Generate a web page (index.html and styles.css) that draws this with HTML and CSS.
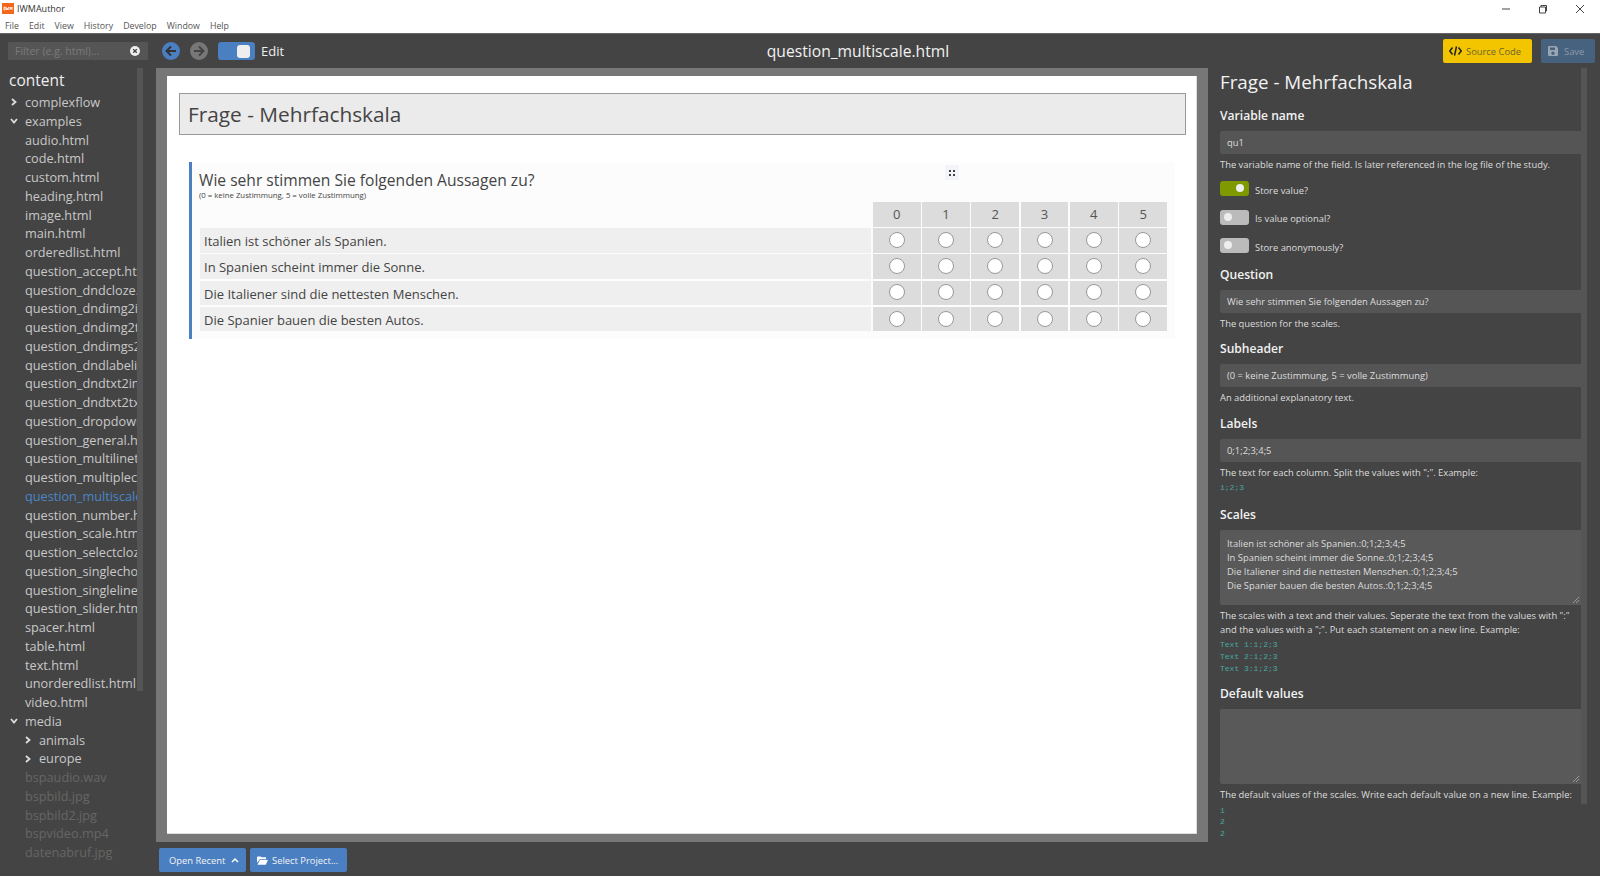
FILE: index.html
```html
<!DOCTYPE html>
<html lang="en">

<head>
    <meta charset="UTF-8">
    <title>IWMAuthor</title>
    <link rel="stylesheet" href="styles.css">
</head>

<body>
    <header class="titlebar">
        <div class="title-row">
            <svg class="app-icon" width="12" height="11" viewBox="0 0 12 11"><rect width="12" height="11" fill="#f4661b"/><path d="M2 4h1.2v3H2zM4 4l.6 3 .7-2 .7 2 .6-3M8 7V4l1 2 1-2v3" fill="none" stroke="#fff" stroke-width=".8"/></svg>
            <span class="app-name">IWMAuthor</span>
            <div class="win-buttons">
                <svg width="10" height="10" viewBox="0 0 10 10"><path d="M1 5h8" stroke="#444" fill="none"/></svg>
                <svg width="10" height="10" viewBox="0 0 10 10"><path d="M1.5 3h6v6h-6zM3 3V1.5h5.5V7H7.500" stroke="#444" fill="none"/></svg>
                <svg width="10" height="10" viewBox="0 0 10 10"><path d="M1 1l8 8M9 1l-8 8" stroke="#444" fill="none"/></svg>
            </div>
        </div>
        <nav class="menu">
            <span>File</span><span>Edit</span><span>View</span><span>History</span><span>Develop</span><span>Window</span><span>Help</span>
        </nav>
    </header>

    <div class="toolbar">
        <div class="filter-cell">
            <div class="filter">
                <input type="text" placeholder="Filter (e.g. html)...">
                <svg width="10" height="10" viewBox="0 0 10 10"><circle cx="5" cy="5" r="5" fill="#eee"/><path d="M3.200 3.200l3.600 3.600M6.800 3.200l-3.600 3.600" stroke="#444" stroke-width="1.300"/></svg>
            </div>
        </div>
        <div class="nav-cell">
            <svg width="18" height="18" viewBox="0 0 18 18"><circle cx="9" cy="9" r="9" fill="#4a7fc1"/><path d="M14 9H5M9 4.500L4.500 9 9 13.500" fill="none" stroke="#333" stroke-width="2"/></svg>
            <svg class="nav-next" width="18" height="18" viewBox="0 0 18 18"><circle cx="9" cy="9" r="9" fill="#777"/><path d="M4 9h9M9 4.500L13.500 9 9 13.500" fill="none" stroke="#444" stroke-width="2"/></svg>
            <div class="mode-toggle"><i></i></div>
            <span class="mode-label">Edit</span>
        </div>
        <div class="doc-title">question_multiscale.html</div>
        <div class="actions">
            <button class="btn btn-source">
                <svg width="13" height="10" viewBox="0 0 13 10"><path d="M3.500 1.500L.8 5l2.700 3.500M9.500 1.500L12.200 5 9.500 8.500M7.500 .5L5.500 9.500" fill="none" stroke="#222" stroke-width="1.500"/></svg>
                Source Code
            </button>
            <button class="btn btn-save">
                <svg width="10" height="10" viewBox="0 0 10 10"><path d="M1 0h7l2 2v7a1 1 0 0 1-1 1H1a1 1 0 0 1-1-1V1a1 1 0 0 1 1-1zm1 1.500v2.500h5V1.500zM5 5.500a1.700 1.700 0 1 0 0 3.400 1.700 1.700 0 0 0 0-3.400z" fill="#98a5b3" fill-rule="evenodd"/></svg>
                Save
            </button>
        </div>
    </div>

    <div class="main">
        <aside class="sidebar">
            <div class="tree">
                <h2>content</h2>
                <ul>
                    <li class="folder"><svg width="8" height="8" viewBox="0 0 8 8"><path d="M2 1l3.500 3L2 7" fill="none" stroke="#ddd" stroke-width="1.800"/></svg>complexflow</li>
                    <li class="folder"><svg width="8" height="8" viewBox="0 0 8 8"><path d="M1 2l3 3.500L7 2" fill="none" stroke="#ddd" stroke-width="1.800"/></svg>examples</li>
                    <li class="file">audio.html</li>
                    <li class="file">code.html</li>
                    <li class="file">custom.html</li>
                    <li class="file">heading.html</li>
                    <li class="file">image.html</li>
                    <li class="file">main.html</li>
                    <li class="file">orderedlist.html</li>
                    <li class="file">question_accept.html</li>
                    <li class="file">question_dndcloze.html</li>
                    <li class="file">question_dndimg2img.html</li>
                    <li class="file">question_dndimg2txt.html</li>
                    <li class="file">question_dndimgs2.html</li>
                    <li class="file">question_dndlabelimg.html</li>
                    <li class="file">question_dndtxt2img.html</li>
                    <li class="file">question_dndtxt2txt.html</li>
                    <li class="file">question_dropdown.html</li>
                    <li class="file">question_general.html</li>
                    <li class="file">question_multilinetext.html</li>
                    <li class="file">question_multiplechoice.html</li>
                    <li class="file on">question_multiscale.html</li>
                    <li class="file">question_number.html</li>
                    <li class="file">question_scale.html</li>
                    <li class="file">question_selectcloze.html</li>
                    <li class="file">question_singlechoice.html</li>
                    <li class="file">question_singleline.html</li>
                    <li class="file">question_slider.html</li>
                    <li class="file">spacer.html</li>
                    <li class="file">table.html</li>
                    <li class="file">text.html</li>
                    <li class="file">unorderedlist.html</li>
                    <li class="file">video.html</li>
                    <li class="folder"><svg width="8" height="8" viewBox="0 0 8 8"><path d="M1 2l3 3.500L7 2" fill="none" stroke="#ddd" stroke-width="1.800"/></svg>media</li>
                    <li class="folder nested"><svg width="8" height="8" viewBox="0 0 8 8"><path d="M2 1l3.500 3L2 7" fill="none" stroke="#ddd" stroke-width="1.800"/></svg>animals</li>
                    <li class="folder nested"><svg width="8" height="8" viewBox="0 0 8 8"><path d="M2 1l3.500 3L2 7" fill="none" stroke="#ddd" stroke-width="1.800"/></svg>europe</li>
                    <li class="file off">bspaudio.wav</li>
                    <li class="file off">bspbild.jpg</li>
                    <li class="file off">bspbild2.jpg</li>
                    <li class="file off">bspvideo.mp4</li>
                    <li class="file off">datenabruf.jpg</li>
                </ul>
            </div>
            <div class="scrollbar scrollbar-tree"></div>
        </aside>

        <section class="center">
            <div class="frame">
                <div class="page">
                    <h1>Frage - Mehrfachskala</h1>
                    <div class="question">
                        <div class="handle"><svg width="8" height="8" viewBox="0 0 8 8"><path d="M1 1h2v2H1zM5 1h2v2H5zM1 5h2v2H1zM5 5h2v2H5z" fill="#444"/></svg></div>
                        <h4>Wie sehr stimmen Sie folgenden Aussagen zu?</h4>
                        <p class="sub">(0 = keine Zustimmung, 5 = volle Zustimmung)</p>
                        <div class="scale">
                            <div class="blank"></div>
                            <div class="head">0</div><div class="head">1</div><div class="head">2</div><div class="head">3</div><div class="head">4</div><div class="head">5</div>

                            <div class="label">Italien ist schöner als Spanien.</div>
                            <div class="cell"><input type="radio" name="r1"></div><div class="cell"><input type="radio" name="r1"></div><div class="cell"><input type="radio" name="r1"></div><div class="cell"><input type="radio" name="r1"></div><div class="cell"><input type="radio" name="r1"></div><div class="cell"><input type="radio" name="r1"></div>

                            <div class="label">In Spanien scheint immer die Sonne.</div>
                            <div class="cell"><input type="radio" name="r2"></div><div class="cell"><input type="radio" name="r2"></div><div class="cell"><input type="radio" name="r2"></div><div class="cell"><input type="radio" name="r2"></div><div class="cell"><input type="radio" name="r2"></div><div class="cell"><input type="radio" name="r2"></div>

                            <div class="label">Die Italiener sind die nettesten Menschen.</div>
                            <div class="cell"><input type="radio" name="r3"></div><div class="cell"><input type="radio" name="r3"></div><div class="cell"><input type="radio" name="r3"></div><div class="cell"><input type="radio" name="r3"></div><div class="cell"><input type="radio" name="r3"></div><div class="cell"><input type="radio" name="r3"></div>

                            <div class="label">Die Spanier bauen die besten Autos.</div>
                            <div class="cell"><input type="radio" name="r4"></div><div class="cell"><input type="radio" name="r4"></div><div class="cell"><input type="radio" name="r4"></div><div class="cell"><input type="radio" name="r4"></div><div class="cell"><input type="radio" name="r4"></div><div class="cell"><input type="radio" name="r4"></div>
                        </div>
                    </div>
                </div>
            </div>
            <div class="bottom-bar">
                <button class="btn btn-blue btn-recent">Open Recent
                    <svg width="8" height="6" viewBox="0 0 8 6"><path d="M1 5l3-3 3 3" fill="none" stroke="#fff" stroke-width="1.500"/></svg>
                </button>
                <button class="btn btn-blue btn-project">
                    <svg width="11" height="9" viewBox="0 0 12 9"><path d="M0 1a1 1 0 0 1 1-1h3l1 1h4a1 1 0 0 1 1 1v1H3L0 7zM3.200 4H12L9.500 9H.5z" fill="#fff"/></svg>
                    Select Project...
                </button>
            </div>
        </section>

        <aside class="props">
            <div class="form">
                <h2>Frage - Mehrfachskala</h2>

                <div class="field first">
                    <h3>Variable name</h3>
                    <div class="box">qu1</div>
                    <p class="help">The variable name of the field. Is later referenced in the log file of the study.</p>
                    <div class="switch-row"><span class="switch on"></span>Store value?</div>
                    <div class="switch-row"><span class="switch"></span>Is value optional?</div>
                    <div class="switch-row"><span class="switch"></span>Store anonymously?</div>
                </div>

                <div class="field">
                    <h3>Question</h3>
                    <div class="box">Wie sehr stimmen Sie folgenden Aussagen zu?</div>
                    <p class="help">The question for the scales.</p>
                </div>

                <div class="field">
                    <h3>Subheader</h3>
                    <div class="box">(0 = keine Zustimmung, 5 = volle Zustimmung)</div>
                    <p class="help">An additional explanatory text.</p>
                </div>

                <div class="field labels">
                    <h3>Labels</h3>
                    <div class="box">0;1;2;3;4;5</div>
                    <p class="help">The text for each column. Split the values with ";". Example:</p>
                    <pre>1;2;3</pre>
                </div>

                <div class="field">
                    <h3>Scales</h3>
                    <div class="box area">Italien ist schöner als Spanien.:0;1;2;3;4;5<br>In Spanien scheint immer die Sonne.:0;1;2;3;4;5<br>Die Italiener sind die nettesten Menschen.:0;1;2;3;4;5<br>Die Spanier bauen die besten Autos.:0;1;2;3;4;5
                        <svg class="grip" width="8" height="8" viewBox="0 0 8 8"><path d="M1 7l6-6M4 7l3-3" stroke="#999" fill="none"/></svg>
                    </div>
                    <p class="help">The scales with a text and their values. Seperate the text from the values with ":" and the values with a ";". Put each statement on a new line. Example:</p>
                    <pre>Text 1:1;2;3
Text 2:1;2;3
Text 3:1;2;3</pre>
                </div>

                <div class="field">
                    <h3>Default values</h3>
                    <div class="box area">
                        <svg class="grip" width="8" height="8" viewBox="0 0 8 8"><path d="M1 7l6-6M4 7l3-3" stroke="#999" fill="none"/></svg>
                    </div>
                    <p class="help">The default values of the scales. Write each default value on a new line. Example:</p>
                    <pre>1
2
2</pre>
                </div>
            </div>
            <div class="scrollbar scrollbar-props"></div>
        </aside>
    </div>
</body>

</html>
```

FILE: styles.css
```css
* {
    margin: 0;
    padding: 0;
    box-sizing: border-box;
    list-style: none;
}

html,
body {
    height: 100%;
    overflow: hidden;
}

body {
    display: flex;
    flex-direction: column;
    background: #444;
    color: #444;
    font-family: "Open Sans", "Liberation Sans", sans-serif;
}

/* title bar */
.titlebar {
    height: 34px;
    background: #fff;
    border-bottom: 1px solid #666;
    flex: none;
}

.title-row {
    display: flex;
    align-items: center;
    height: 17px;
    padding-left: 2px;
    font-size: 9px;
    color: #333;
}

.app-name {
    margin-left: 3px;
}

.win-buttons {
    display: flex;
    align-items: center;
    gap: 27px;
    margin-left: auto;
    padding-right: 15px;
}

.menu {
    display: flex;
    gap: 10px;
    padding-left: 5px;
    height: 16px;
    line-height: 18px;
    font-size: 8.800px;
    color: #555;
}

/* tool bar */
.toolbar {
    display: flex;
    align-items: center;
    height: 34px;
    flex: none;
}

.filter-cell {
    width: 156px;
    padding: 0 8px;
}

.filter {
    display: flex;
    align-items: center;
    height: 18px;
    padding: 0 8px 0 7px;
    background: #555;
    border-radius: 1px;
}

.filter input {
    flex: 1;
    min-width: 0;
    border: 0;
    outline: 0;
    background: none;
    font: 10.500px "Open Sans", sans-serif;
}

.filter input::placeholder {
    color: #7b7b7b;
}

.nav-cell {
    display: flex;
    align-items: center;
    width: 134px;
    padding-left: 6px;
}

.nav-next {
    margin-left: 10px;
}

.mode-toggle {
    display: flex;
    align-items: center;
    justify-content: flex-end;
    width: 37px;
    height: 18px;
    margin-left: 10px;
    padding-right: 5px;
    background: #4a7fc1;
    border-radius: 3px;
}

.mode-toggle i {
    width: 13px;
    height: 13px;
    background: #eee;
    border-radius: 3px;
}

.mode-label {
    margin-left: 6px;
    font-size: 13px;
    color: #eee;
}

.doc-title {
    flex: 1;
    padding-right: 17px;
    text-align: center;
    font-size: 15.650px;
    color: #f2f2f2;
}

.actions {
    display: flex;
    gap: 9px;
    padding-right: 5px;
}

.btn {
    display: flex;
    align-items: center;
    height: 24px;
    border: 0;
    border-radius: 2px;
    font: 9.400px "Open Sans", sans-serif;
}

.btn-source {
    width: 89px;
    padding-left: 6px;
    gap: 4px;
    background: #f2c500;
    color: #6e6330;
}

.btn-save {
    width: 54px;
    padding-left: 7px;
    gap: 6px;
    background: #47627f;
    color: #8d9aa8;
}

.btn-blue {
    background: #4a7fc1;
    color: #f2f2f2;
}

/* main columns */
.main {
    flex: 1;
    display: flex;
    min-height: 0;
}

.sidebar {
    width: 156px;
    flex: none;
    display: flex;
    overflow: hidden;
}

.tree {
    width: 137px;
    flex: none;
    overflow: hidden;
    white-space: nowrap;
    padding-top: 1px;
    color: #c8c8c8;
    font-size: 12.700px;
}

.tree h2 {
    height: 24px;
    line-height: 22px;
    padding-left: 9px;
    font-size: 15.500px;
    font-weight: 400;
    color: #eee;
}

.tree li {
    height: 18.750px;
    line-height: 18.750px;
    padding-left: 25px;
}

.tree .folder {
    display: flex;
    align-items: center;
    padding-left: 10px;
}

.tree .folder svg {
    margin-right: 7px;
    flex: none;
}

.tree .nested {
    padding-left: 24px;
}

.tree .on {
    color: #4a86c8;
}

.tree .off {
    color: #666;
}

.scrollbar {
    width: 6px;
    flex: none;
    background: #555;
}

.scrollbar-tree {
    height: 623px;
}

.scrollbar-props {
    height: 736px;
}

.center {
    width: 1052px;
    flex: none;
    display: flex;
    flex-direction: column;
}

.frame {
    flex: 1;
    padding: 8px 11px 8px 11px;
    background: #777;
}

.page {
    height: 100%;
    padding: 17px 10px 0 12px;
    background: #fff;
    border-right: 1px solid #ddd;
    border-bottom: 1px solid #ddd;
}

.page h1 {
    height: 42px;
    line-height: 40px;
    padding-left: 8px;
    background: #ebebeb;
    border: 1px solid #999;
    font-size: 20.800px;
    font-weight: 400;
    color: #444;
}

.question {
    position: relative;
    margin: 27px 11px 0 10px;
    height: 177px;
    padding: 7px 8px 0 7px;
    background: #fcfcfc;
    border-left: 3px solid #4a7fc1;
}

.handle {
    position: absolute;
    left: 753px;
    top: 3px;
    width: 14px;
    height: 15px;
    display: flex;
    align-items: center;
    justify-content: center;
    background: #f2f4f7;
}

.question h4 {
    font-size: 15.600px;
    line-height: 22px;
    font-weight: 400;
}

.sub {
    font-size: 7.800px;
    line-height: 8px;
}

.scale {
    display: grid;
    grid-template-columns: 1fr repeat(6, 47.800px);
    grid-auto-rows: 24.700px;
    gap: 1.500px;
    margin: 3px 0 0 1px;
}

.head,
.cell {
    display: flex;
    align-items: center;
    justify-content: center;
    background: #dcdcdc;
}

.head {
    font-size: 13px;
    color: #555;
}

.cell {
    padding-bottom: 1px;
}

.label {
    padding-left: 4px;
    line-height: 26px;
    background: #efefef;
    font-size: 13px;
    color: #444;
}

.cell input {
    appearance: none;
    width: 16px;
    height: 16px;
    background: #fff;
    border: 1px solid #999;
    border-radius: 50%;
}

.bottom-bar {
    display: flex;
    gap: 4px;
    height: 34px;
    padding: 6px 0 0 3px;
    flex: none;
}

.btn-recent {
    width: 87px;
    padding-left: 10px;
    gap: 6px;
}

.btn-project {
    width: 97px;
    padding-left: 7px;
    gap: 4px;
}

/* properties */
.props {
    flex: 1;
    display: flex;
    padding-left: 12px;
    min-width: 0;
    color: #ddd;
}

.form {
    width: 361px;
    flex: none;
}

.form h2 {
    height: 28px;
    line-height: 28px;
    font-size: 18.800px;
    font-weight: 400;
    color: #f2f2f2;
}

.field {
    margin-top: 9px;
}

.field.first {
    margin: 10px 0 10px;
}

.field.labels {
    padding-bottom: 2px;
}

.field h3 {
    height: 20px;
    line-height: 20px;
    margin-bottom: 5px;
    font-size: 12.100px;
    font-weight: 600;
    color: #f2f2f2;
}

.box {
    position: relative;
    height: 23px;
    line-height: 23px;
    padding-left: 7px;
    background: #555;
    border-radius: 2px 0 0 2px;
    font-size: 9.400px;
    color: #ddd;
}

.box.area {
    height: 75px;
    padding-top: 7px;
    line-height: 13.900px;
    background: #595959;
}

.grip {
    position: absolute;
    right: 1px;
    bottom: 1px;
}

.help {
    margin-top: 4px;
    line-height: 13.500px;
    font-size: 9.400px;
    color: #ddd;
}

.area + .help {
    margin-top: 4.500px;
}

.switch-row {
    display: flex;
    align-items: center;
    height: 15px;
    margin-top: 13.500px;
    font-size: 9.400px;
}

.help + .switch-row {
    margin-top: 11px;
}

.switch {
    position: relative;
    width: 29px;
    height: 15px;
    margin: 0 6px 3px 0;
    background: #bbb;
    border-radius: 3px;
}

.switch::after {
    content: "";
    position: absolute;
    left: 4px;
    top: 3px;
    width: 8px;
    height: 8px;
    background: #eee;
    border-radius: 50%;
}

.switch.on {
    background: #7f9a00;
}

.switch.on::after {
    left: 16px;
}

pre {
    margin: 3px 0 0;
    font: 8px/11.800px "Liberation Mono", monospace;
    color: #46a8a0;
}
```
